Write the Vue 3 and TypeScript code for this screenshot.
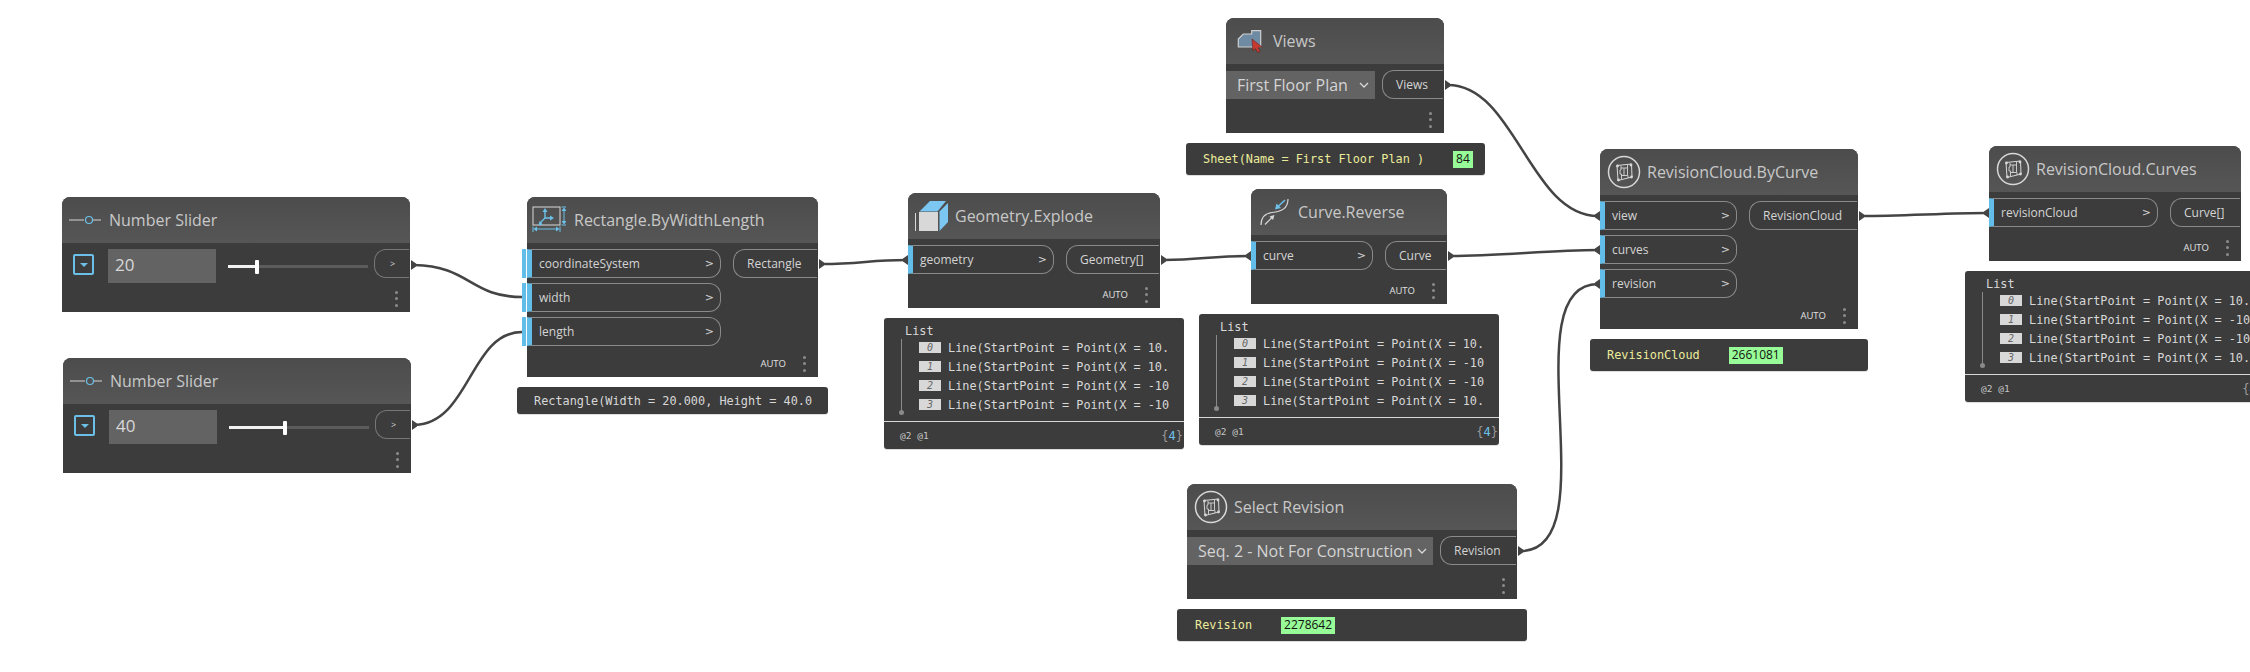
<template>
  <div class="canvas">
    <svg class="wires" width="2250" height="672" viewBox="0 0 2250 672" fill="none">
      <path v-for="(w, i) in wires" :key="i" :d="w" />
      <path v-for="(n, i) in outNubs" :key="'o' + i" class="nub" :d="`M${n[0]} ${n[1] - 5}L${n[0] + 5} ${n[1] - 1.5}V${n[1] + 1.5}L${n[0]} ${n[1] + 5}Z`" />
      <path v-for="(n, i) in inNubs" :key="'i' + i" class="nub" :d="`M${n[0]} ${n[1] - 5}L${n[0] - 5} ${n[1] - 1.5}V${n[1] + 1.5}L${n[0]} ${n[1] + 5}Z`" />
    </svg>

    <div
      v-for="node in nodes"
      :key="node.title + node.x"
      class="node"
      :style="{ left: node.x + 'px', top: node.y + 'px', width: node.w + 'px', height: node.h + 'px' }"
    >
      <div class="head">
        <svg v-if="node.icon === 'slider'" class="icon" width="34" height="14" viewBox="0 0 34 14" fill="none">
          <path d="M0 7H15M24 7H32" stroke="#d4d4d4" stroke-width="1.2" />
          <circle cx="20" cy="7" r="3.500" stroke="#6cc0e8" stroke-width="1.2" />
        </svg>
        <svg v-else-if="node.icon === 'rect'" class="icon icon-rect" width="34" height="28" viewBox="0 0 34 28" fill="none">
          <rect x="1" y="1" width="27" height="18" stroke="#d8d8d8" />
          <path d="M13 12V5M13 12H19M13 12 8 17" stroke="#6cc0e8" stroke-width="1.4" />
          <path d="M13 2 10.500 6H15.500ZM22 12 18 9.500V14.500ZM6.500 19.500 7.500 15 11 18.500Z" fill="#6cc0e8" />
          <path d="M32 3V17M29.500 1H34M29.500 19H34M3 23H26M1 20.500V26M28 20.500V26" stroke="#6cc0e8" />
          <path d="M32 1.500 29.500 5H34.500ZM32 18.500 29.500 15H34.500ZM1.500 23 5 20.500V25.500ZM27.500 23 24 20.500V25.500Z" fill="#6cc0e8" />
        </svg>
        <svg v-else-if="node.icon === 'cube'" class="icon" width="34" height="30" viewBox="0 0 34 30" fill="none">
          <path d="M.5 12V30" stroke="#d8d8d8" />
          <path d="M4 11H23V30H4Z" fill="#d8d8d8" />
          <path d="M4.500 10.500 15 0H31L22.500 10.500Z" fill="#7cc6f2" />
          <path d="M24.500 10.500 33 2V21L24.500 30Z" fill="#7cc6f2" />
        </svg>
        <svg v-else-if="node.icon === 'reverse'" class="icon icon-reverse" width="30" height="28" viewBox="0 0 30 28" fill="none">
          <path d="M1 27C1 20 5 15.500 12 14.500C21 13.500 28 11 28 1" stroke="#d8d8d8" stroke-width="1.200" />
          <path d="M5 26.500 13 18.500" stroke="#d8d8d8" stroke-width="1.200" />
          <path d="M14.500 17 9.500 18.500 13 22Z" fill="#d8d8d8" />
          <path d="M25 2 17 9.500" stroke="#6cc0e8" stroke-width="1.500" />
          <path d="M15 11.500 16.500 5.500 21 10Z" fill="#6cc0e8" />
        </svg>
        <svg v-else-if="node.icon === 'views'" class="icon icon-views" width="26" height="24" viewBox="0 0 26 24" fill="none">
          <path d="M1.300 18V10L6.300 5H14.700V1.700H23.700V18Z" fill="#6f8aa3" stroke="#cfcfcf" stroke-width="1.200" />
          <path d="M15 10 25 18 21 18.500 23 22.500 20.500 23.500 18.500 19.500 16 22Z" fill="#c63a32" stroke="#5a2320" stroke-width=".6" />
        </svg>
        <svg v-else class="icon" width="34" height="34" viewBox="0 0 34 34" fill="none">
          <circle cx="17" cy="17" r="15.500" stroke="#d8d8d8" stroke-width="1.500" />
          <path d="M10 10.500 24.500 9 25 22 11 25.500Z" stroke="#d8d8d8" />
          <path d="M14 11V15H13V19H14.500V24M14 13H20.500V20.500H14.500M17 13V20.500M20.500 10V13M21 20.500V23" stroke="#d8d8d8" stroke-width=".9" />
          <circle cx="10.500" cy="11" r="1.400" fill="#d8d8d8" />
          <circle cx="24" cy="10" r="1.400" fill="#d8d8d8" />
          <circle cx="11.500" cy="25" r="1.400" fill="#d8d8d8" />
          <circle cx="24.500" cy="22" r="1.400" fill="#d8d8d8" />
        </svg>
        <span class="title">{{ node.title }}</span>
      </div>

      <div class="body">
        <!-- slider row -->
        <div v-if="node.slider" class="slider-row">
          <span class="drop"><i /></span>
          <span class="num">{{ node.slider.value }}</span>
          <span class="track">
            <span class="track-fill" :style="{ width: node.slider.fill + 'px' }" />
            <span class="thumb" />
          </span>
          <span class="port out small">&gt;</span>
        </div>

        <!-- dropdown row -->
        <div v-else-if="node.select" class="select-row">
          <span class="select" :style="{ width: node.select.w + 'px' }">
            <span>{{ node.select.text }}</span>
            <svg width="10" height="6" viewBox="0 0 10 6" fill="none"><path d="M1 1 5 5 9 1" stroke="#d8d8d8" stroke-width="1.300" /></svg>
          </span>
          <span class="port out" :style="{ width: node.select.outW + 'px' }">{{ node.outName }}</span>
        </div>

        <!-- ports -->
        <div v-else class="ports">
          <div class="inputs">
            <div
              v-for="p in node.inputs"
              :key="p"
              class="port in"
              :class="{ left: node.outer }"
              :style="{ width: node.inW + 'px' }"
            >
              <span>{{ p }}</span><span class="gt">&gt;</span>
            </div>
          </div>
          <div class="port out" :style="{ width: node.outW + 'px' }">{{ node.outName }}</div>
        </div>

        <div class="foot">
          <span v-if="node.auto" class="auto">AUTO</span>
          <span class="dots"><i /><i /><i /></span>
        </div>
      </div>
    </div>

    <div
      v-for="p in previews"
      :key="p.x"
      class="preview"
      :style="{ left: p.x + 'px', top: p.y + 'px', width: p.w + 'px' }"
    >
      <div v-if="p.text" class="one-line" :style="{ paddingLeft: p.pad + 'px' }">{{ p.text }}</div>
      <div v-else-if="p.label" class="one-line typed" :style="{ paddingLeft: p.pad + 'px', gap: p.gap + 'px' }">
        <span>{{ p.label }}</span><b>{{ p.id }}</b>
      </div>
      <template v-else>
        <div class="list">
          <div class="list-name">List</div>
          <div v-for="(row, i) in p.rows" :key="i" class="list-row">
            <em>{{ i }}</em><span>{{ row }}</span>
          </div>
          <i class="list-rail" />
        </div>
        <div class="list-foot"><span>@2 @1</span><span class="count">{<u>4</u>}</span></div>
      </template>
    </div>
  </div>
</template>

<script setup lang="ts">
interface GraphNode {
  title: string
  x: number
  y: number
  w: number
  h: number
  icon: string
  auto?: boolean
  outer?: boolean
  inputs?: string[]
  inW?: number
  outW?: number
  outName?: string
  slider?: { value: string; fill: number }
  select?: { text: string; w: number; outW: number }
}

interface Preview {
  x: number
  y: number
  w: number
  pad?: number
  gap?: number
  text?: string
  label?: string
  id?: string
  rows?: string[]
}

const nodes: GraphNode[] = [
  { title: 'Number Slider', x: 62, y: 197, w: 348, h: 115, icon: 'slider', slider: { value: '20', fill: 27 } },
  { title: 'Number Slider', x: 63, y: 358, w: 348, h: 115, icon: 'slider', slider: { value: '40', fill: 54 } },
  {
    title: 'Rectangle.ByWidthLength', x: 527, y: 197, w: 291, h: 180, icon: 'rect', auto: true, outer: true,
    inputs: ['coordinateSystem', 'width', 'length'], inW: 194, outW: 84, outName: 'Rectangle',
  },
  {
    title: 'Geometry.Explode', x: 908, y: 193, w: 252, h: 115, icon: 'cube', auto: true,
    inputs: ['geometry'], inW: 146, outW: 93, outName: 'Geometry[]',
  },
  {
    title: 'Curve.Reverse', x: 1251, y: 189, w: 196, h: 115, icon: 'reverse', auto: true,
    inputs: ['curve'], inW: 122, outW: 61, outName: 'Curve',
  },
  {
    title: 'Views', x: 1226, y: 18, w: 218, h: 115, icon: 'views', outName: 'Views',
    select: { text: 'First Floor Plan', w: 149, outW: 61 },
  },
  {
    title: 'Select Revision', x: 1187, y: 484, w: 330, h: 115, icon: 'cloud', outName: 'Revision',
    select: { text: 'Seq. 2 - Not For Construction', w: 246, outW: 76 },
  },
  {
    title: 'RevisionCloud.ByCurve', x: 1600, y: 149, w: 258, h: 180, icon: 'cloud', auto: true,
    inputs: ['view', 'curves', 'revision'], inW: 137, outW: 108, outName: 'RevisionCloud',
  },
  {
    title: 'RevisionCloud.Curves', x: 1989, y: 146, w: 252, h: 115, icon: 'cloud', auto: true,
    inputs: ['revisionCloud'], inW: 169, outW: 70, outName: 'Curve[]',
  },
]

const line = (x: string) => `Line(StartPoint = Point(X = ${x}`

const previews: Preview[] = [
  { x: 517, y: 387, w: 311, pad: 17, text: 'Rectangle(Width = 20.000, Height = 40.0' },
  { x: 884, y: 318, w: 300, rows: [line('10.'), line('10.'), line('-10'), line('-10')] },
  { x: 1199, y: 314, w: 300, rows: [line('10.'), line('-10'), line('-10'), line('10.')] },
  { x: 1186, y: 143, w: 299, pad: 17, label: 'Sheet(Name = First Floor Plan )', id: '84', gap: 29 },
  { x: 1177, y: 609, w: 350, pad: 18, label: 'Revision', id: '2278642', gap: 29 },
  { x: 1590, y: 339, w: 278, pad: 17, label: 'RevisionCloud', id: '2661081', gap: 29 },
  // runs past the window edge, the count is cropped as in the source picture
  { x: 1965, y: 271, w: 300, rows: [line('10.'), line('-10'), line('-10'), line('10.')] },
]

const wires = [
  'M414 265C470 266 470 297 522 297',
  'M415 425C470 423 470 332 522 332',
  'M822 264C860 264 870 260 906 260',
  'M1164 260C1200 260 1210 256 1249 256',
  'M1448 85C1515 85 1530 216 1598 216',
  'M1451 256C1500 256 1550 250 1598 250',
  'M1521 551C1610 551 1510 284 1598 284',
  'M1862 216C1900 216 1950 213 1987 213',
]

// [x, y] of the small connector tabs at the node edges
const outNubs = [[411, 265], [412, 425], [819, 264], [1161, 260], [1448, 256], [1445, 85], [1518, 551], [1859, 216]]
const inNubs = [[908, 260], [1251, 256], [1600, 216], [1600, 250], [1600, 284], [1989, 213]]
</script>

<style>
html,
body {
  background: #fff;
  overflow: hidden;
}
</style>

<style scoped>
.canvas {
  position: relative;
  width: 2250px;
  height: 672px;
  overflow: hidden;
  background: #fff;
  font-family: "Open Sans", "Noto Sans", sans-serif;
}

.wires {
  position: absolute;
  left: 0;
  top: 0;
}

.wires path {
  stroke: #444;
  stroke-width: 2.500;
}

.wires .nub {
  fill: #444;
  stroke: none;
}

.node {
  position: absolute;
  display: flex;
  flex-direction: column;
  color: #d4d4d4;
  background: #3c3c3c;
  border-radius: 8px 8px 0 0;
}

.head {
  display: flex;
  align-items: center;
  gap: 6px;
  height: 46px;
  padding-left: 7px;
  flex-shrink: 0;
  background: linear-gradient(#4c4c4c, #565656);
  border-radius: 8px 8px 0 0;
}

.icon-rect {
  margin: 0 2px 0 -2px;
}

.icon-reverse {
  margin: 0 2px;
}

.icon-views {
  margin: 0 4px;
}

.title {
  font-size: 16px;
  color: #c8c8c8;
  white-space: nowrap;
}

.body {
  flex: 1;
  display: flex;
  flex-direction: column;
  padding-top: 6px;
}

.slider-row {
  display: flex;
  align-items: flex-start;
  height: 29px;
}

.drop {
  display: flex;
  align-items: center;
  justify-content: center;
  width: 21px;
  height: 21px;
  margin: 5px 14px 0 11px;
  border: 2px solid #6cc0e8;
  box-sizing: border-box;
  border-radius: 2px;
}

.drop i {
  border: 4px solid transparent;
  border-top: 4px solid #6cc0e8;
  border-bottom: 0;
}

.num {
  width: 108px;
  height: 34px;
  box-sizing: border-box;
  margin-right: 12px;
  padding-left: 7px;
  background: #636363;
  font-size: 17px;
  line-height: 32px;
  color: #d8d8d8;
}

.track {
  position: relative;
  display: flex;
  width: 140px;
  height: 3px;
  margin: 16px 0 0;
  background: #5c5c5c;
}

.track-fill {
  height: 3px;
  background: #f2f2f2;
}

.thumb {
  width: 4px;
  height: 14px;
  margin-top: -5px;
  border-radius: 1px;
  background: #fff;
}

.ports {
  display: flex;
  align-items: flex-start;
  justify-content: space-between;
}

.inputs {
  display: flex;
  flex-direction: column;
  gap: 5px;
}

.port {
  display: flex;
  align-items: center;
  box-sizing: border-box;
  height: 29px;
  font-size: 12px;
  color: #d4d4d4;
  white-space: nowrap;
  border: 1px solid #8a8a8a;
}

.port.in {
  position: relative;
  justify-content: space-between;
  padding: 0 6px 0 7px;
  border-left: 5px solid #62bde8;
  border-radius: 0 12px 12px 0;
}

.port.in.left::before {
  content: "";
  position: absolute;
  left: -10px;
  top: -1px;
  bottom: -1px;
  width: 4px;
  background: #62bde8;
}

.gt {
  font-family: "DejaVu Sans", sans-serif;
  font-size: 11px;
}

.port.out {
  justify-content: flex-start;
  padding-left: 13px;
  margin: 0 1px 0 auto;
  border-right: 0;
  border-radius: 12px 0 0 12px;
}

.port.small {
  width: 35px;
  padding-left: 15px;
  font-size: 9px;
  border-color: #777;
}

.select-row {
  display: flex;
  align-items: flex-start;
  height: 29px;
}

.select {
  display: flex;
  align-items: center;
  justify-content: space-between;
  box-sizing: border-box;
  height: 28px;
  margin-top: 1px;
  padding: 0 6px 0 11px;
  background: #636363;
  font-size: 16px;
  color: #d4d4d4;
  white-space: nowrap;
}

.foot {
  margin-top: auto;
  display: flex;
  align-items: center;
  justify-content: flex-end;
  height: 27px;
  padding-right: 12px;
  gap: 17px;
}

.auto {
  font-size: 9.500px;
  color: #e0e0e0;
}

.dots {
  display: flex;
  flex-direction: column;
  gap: 3.500px;
}

.dots i {
  width: 3px;
  height: 3px;
  background: #8c8c8c;
  border-radius: 50%;
}

.preview {
  position: absolute;
  background: #3c3c3c;
  border-radius: 3px;
  box-shadow: 0 1px 0 #ddd;
  color: #d8d8d8;
  font-family: "DejaVu Sans Mono", monospace;
  font-size: 11.850px;
}

.one-line {
  display: flex;
  align-items: center;
  height: 27px;
  white-space: nowrap;
}

.typed {
  height: 32px;
  color: #ecec9c;
}

.typed b {
  padding: 0 3px;
  height: 17px;
  line-height: 16px;
  background: #97fc97;
  color: #111;
  font-family: "Open Sans", sans-serif;
  font-size: 12px;
  font-weight: 400;
}

.list {
  position: relative;
  box-sizing: border-box;
  height: 104px;
  padding: 7px 0 0 21px;
  border-bottom: 1px solid #d8d8d8;
  overflow: hidden;
  white-space: nowrap;
}

.list-name {
  height: 13px;
  line-height: 13px;
}

.list-row {
  display: flex;
  align-items: center;
  height: 19px;
  margin-left: 14px;
}

.list-row em {
  width: 22px;
  height: 11px;
  margin-right: 7px;
  background: #d8d8d8;
  color: #666;
  font-size: 10px;
  line-height: 11px;
  text-align: center;
}

.list-rail {
  position: absolute;
  left: 17px;
  top: 21px;
  height: 73px;
  border-left: 1px solid #8a8a8a;
}

.list-rail::after {
  content: "";
  position: absolute;
  left: -3px;
  bottom: -3px;
  width: 5px;
  height: 5px;
  border-radius: 50%;
  background: #8a8a8a;
}

.list-foot {
  display: flex;
  align-items: center;
  justify-content: space-between;
  height: 27px;
  padding: 0 1px 0 16px;
  font-size: 9.500px;
  color: #c4c4c4;
}

.count {
  font-size: 12px;
  color: #9a9a9a;
}

.count u {
  text-decoration: none;
  color: #6cc0e8;
}
</style>
